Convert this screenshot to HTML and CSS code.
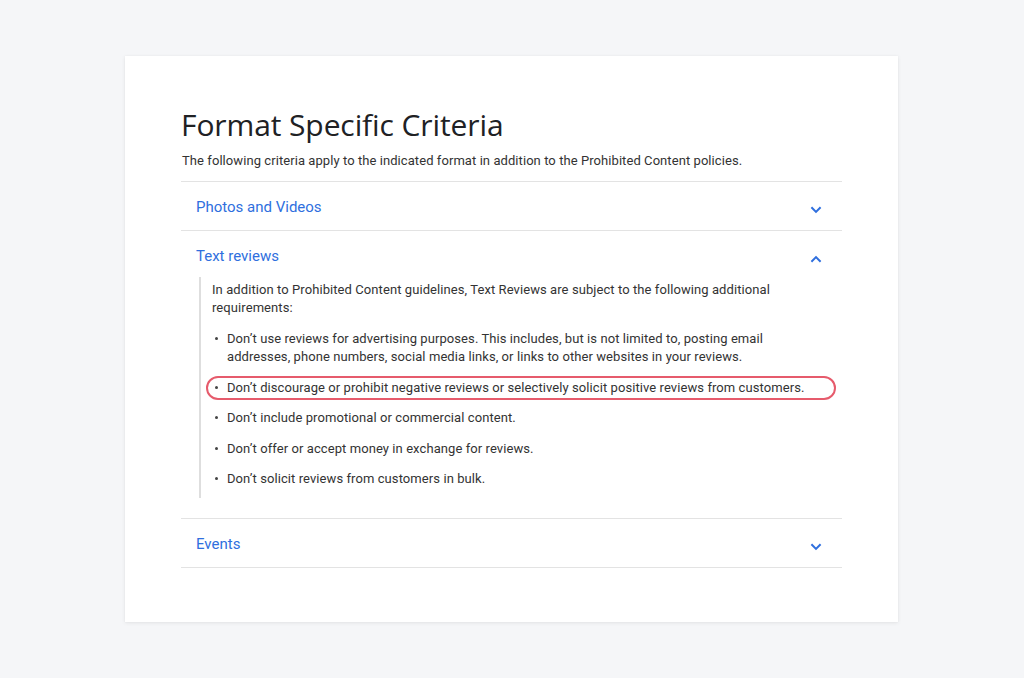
FILE: index.html
```html
<!DOCTYPE html>
<html>
<head>
<meta charset="utf-8">
<link rel="stylesheet" href="styles.css">
</head>
<body>
<div class="card">
  <h1 class="title">Format Specific Criteria</h1>
  <p class="subtitle">The following criteria apply to the indicated format in addition to the Prohibited Content policies.</p>
  <div class="accordion">
    <div class="item">
      <div class="head">
        <span class="label">Photos and Videos</span>
        <svg class="chev" viewBox="0 0 24 24" width="24" height="24"><path d="M7.4 9.3 12 13.9l4.6-4.6" fill="none" stroke="currentColor" stroke-width="2"/></svg>
      </div>
    </div>
    <div class="item open">
      <div class="head">
        <span class="label">Text reviews</span>
        <svg class="chev" viewBox="0 0 24 24" width="24" height="24"><path d="M7.4 14.7 12 10.1l4.6 4.6" fill="none" stroke="currentColor" stroke-width="2"/></svg>
      </div>
      <div class="body">
        <p class="intro">In addition to Prohibited Content guidelines, Text Reviews are subject to the following additional requirements:</p>
        <ul class="list">
          <li>Don’t use reviews for advertising purposes. This includes, but is not limited to, posting email addresses, phone numbers, social media links, or links to other websites in your reviews.</li>
          <li class="marked">Don’t discourage or prohibit negative reviews or selectively solicit positive reviews from customers.</li>
          <li>Don’t include promotional or commercial content.</li>
          <li>Don’t offer or accept money in exchange for reviews.</li>
          <li>Don’t solicit reviews from customers in bulk.</li>
        </ul>
      </div>
    </div>
    <div class="item">
      <div class="head">
        <span class="label">Events</span>
        <svg class="chev" viewBox="0 0 24 24" width="24" height="24"><path d="M7.4 9.3 12 13.9l4.6-4.6" fill="none" stroke="currentColor" stroke-width="2"/></svg>
      </div>
    </div>
  </div>
</div>
</body>
</html>
```

FILE: styles.css
```css
html, body {
  margin: 0;
  padding: 0;
}
body {
  background: #f5f6f8;
  font-family: Roboto, "Liberation Sans", Arial, sans-serif;
  color: #333;
  padding-top: 56px;
  height: 678px;
  box-sizing: border-box;
}
.card {
  margin-left: 125px;
  width: 773px;
  height: 566px;
  box-sizing: border-box;
  background: #fff;
  padding: 49px 56px 0 56px;
  box-shadow: 0 1px 4px rgba(0, 0, 0, 0.08), 0 0 1px rgba(0, 0, 0, 0.06);
}
.title {
  margin: 0;
  font-family: "Open Sans", Roboto, sans-serif;
  font-weight: 400;
  font-size: 30px;
  line-height: 40px;
  color: #202124;
  letter-spacing: -0.1px;
}
.subtitle {
  margin: 7px 0 11px 1px;
  font-size: 13px;
  line-height: 18px;
  color: #333;
  letter-spacing: 0.07px;
}
.accordion {
  border-top: 1px solid #e3e3e3;
}
.item {
  border-bottom: 1px solid #e3e3e3;
}
.head {
  height: 48px;
  box-sizing: border-box;
  display: flex;
  align-items: center;
  justify-content: space-between;
  padding: 2px 14px 0 15px;
  color: #2f6fde;
}
.item.open .head {
  height: 46px;
  padding-top: 4px;
}
.label {
  font-size: 15px;
}
.chev {
  display: block;
  margin-top: 6px;
}
.body {
  margin: 0 0 20px 18px;
  border-left: 2px solid #dedede;
  padding: 4px 30px 10px 11px;
  letter-spacing: 0.08px;
}
.intro {
  margin: 0;
  font-size: 13px;
  line-height: 18px;
}
.list {
  list-style: none;
  margin: 13px 0 0 0;
  padding: 0;
}
.list li {
  position: relative;
  font-size: 13px;
  line-height: 18px;
  padding-left: 15px;
  margin-top: 12.5px;
}
.list li:first-child {
  margin-top: 0;
}
.list li::before {
  content: "";
  position: absolute;
  left: 3px;
  top: 7px;
  width: 3px;
  height: 3px;
  border-radius: 50%;
  background: #444;
}
.list li.marked::after {
  content: "";
  position: absolute;
  left: -6px;
  right: -24px;
  top: -3px;
  bottom: -3px;
  border: 2px solid #e65b6c;
  border-radius: 13px;
}
```
